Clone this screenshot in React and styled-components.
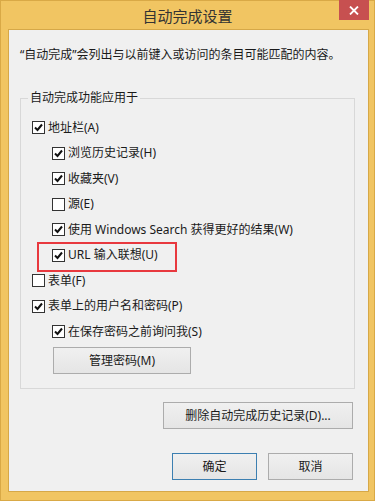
import React from 'react';
import styled, { createGlobalStyle } from 'styled-components';

const GlobalStyle = createGlobalStyle`
  html, body {
    margin: 0;
    padding: 0;
  }
  body {
    background: #f1c562;
    font-family: "Noto Sans", "Noto Sans CJK SC", sans-serif;
  }
`;

const Window = styled.div`
  width: 375px;
  height: 501px;
  box-sizing: border-box;
  background: #f1c562;
  border: 1px solid #d9a946;
  display: flex;
  flex-direction: column;
`;

const TitleBar = styled.div`
  height: 28px;
  display: grid;
  grid-template-columns: 1fr auto 1fr;
  align-items: center;
`;

const Title = styled.div`
  grid-column: 2;
  font-size: 15px;
  color: #333;
  line-height: 28px;
  padding-top: 1px;
`;

const CloseButton = styled.div`
  grid-column: 3;
  justify-self: end;
  align-self: start;
  margin-top: -1px;
  margin-right: 5px;
  width: 30px;
  height: 20px;
  background: #c75050;
  display: flex;
  align-items: center;
  justify-content: center;
`;

const Client = styled.div`
  flex: 1;
  margin: 0 5px 8px 7px;
  background: #f0f0f0;
  border: 1px solid #d6a848;
  padding: 17px 13px 9px 11px;
  display: flex;
  flex-direction: column;
  color: #1a1a1a;
  font-size: 12px;
  line-height: 16px;
`;

const Description = styled.div`
  white-space: nowrap;
`;

const Group = styled.fieldset`
  margin: 27px 0 0 0;
  padding: 9px 10px 14px 7px;
  border: 1px solid #d8d8d8;
  display: flex;
  flex-direction: column;
`;

const Legend = styled.legend`
  padding: 0 2px;
  line-height: 16px;
`;

const Row = styled.div`
  height: 25.5px;
  display: flex;
  align-items: center;
  gap: 3px;
  margin-left: ${p => (p.$level === 2 ? 24 : 4)}px;
  position: relative;
  white-space: nowrap;

  ${p =>
    p.$highlight &&
    `
    &::after {
      content: '';
      position: absolute;
      left: -15px;
      top: -1px;
      width: 140px;
      height: 30px;
      box-sizing: border-box;
      border: 2px solid #e8383e;
    }
  `}
`;

const Box = styled.span`
  width: 13px;
  height: 13px;
  box-sizing: border-box;
  border: 1px solid #333;
  background: #fff;
  display: flex;
  align-items: center;
  justify-content: center;
  flex-shrink: 0;
`;

const Button = styled.div`
  height: 27px;
  width: ${p => p.$width}px;
  box-sizing: border-box;
  border: 1px solid ${p => (p.$default ? '#3c7fb1' : '#acacac')};
  background: linear-gradient(#f0f0f0, #e5e5e5);
  display: flex;
  align-items: center;
  justify-content: center;
  color: #1a1a1a;
  font-size: 12px;
`;

const ManageButton = styled(Button)`
  margin: 2.75px 0 0 25px;
`;

const DeleteButton = styled(Button)`
  align-self: flex-end;
  margin: 13px 2px 0 0;
`;

const Footer = styled.div`
  display: flex;
  justify-content: flex-end;
  gap: 11px;
  margin: 24px 2px 0 0;
`;

const CheckBox = ({ checked }) => (
  <Box>
    {checked && (
      <svg width="11" height="11" viewBox="0 0 11 11">
        <path d="M2 5.5 L4.5 8 L9 2.5" fill="none" stroke="#111" strokeWidth="2" />
      </svg>
    )}
  </Box>
);

const options = [
  { label: '地址栏(A)', checked: true, level: 1 },
  { label: '浏览历史记录(H)', checked: true, level: 2 },
  { label: '收藏夹(V)', checked: true, level: 2 },
  { label: '源(E)', checked: false, level: 2 },
  { label: '使用 Windows Search 获得更好的结果(W)', checked: true, level: 2 },
  { label: 'URL 输入联想(U)', checked: true, level: 2, highlight: true },
  { label: '表单(F)', checked: false, level: 1 },
  { label: '表单上的用户名和密码(P)', checked: true, level: 1 },
  { label: '在保存密码之前询问我(S)', checked: true, level: 2 },
];

const App = () => (
  <>
    <GlobalStyle />
    <Window>
      <TitleBar>
        <Title>自动完成设置</Title>
        <CloseButton>
          <svg width="10" height="9" viewBox="0 0 10 9">
            <path d="M1 0.5 L9 8.5 M9 0.5 L1 8.5" stroke="#fff" strokeWidth="1.8" />
          </svg>
        </CloseButton>
      </TitleBar>
      <Client>
        <Description>“自动完成”会列出与以前键入或访问的条目可能匹配的内容。</Description>
        <Group>
          <Legend>自动完成功能应用于</Legend>
          {options.map(o => (
            <Row key={o.label} $level={o.level} $highlight={o.highlight}>
              <CheckBox checked={o.checked} />
              <span>{o.label}</span>
            </Row>
          ))}
          <ManageButton $width={138}>管理密码(M)</ManageButton>
        </Group>
        <DeleteButton $width={190}>删除自动完成历史记录(D)...</DeleteButton>
        <Footer>
          <Button $width={85} $default>确定</Button>
          <Button $width={85}>取消</Button>
        </Footer>
      </Client>
    </Window>
  </>
);

export default App;
